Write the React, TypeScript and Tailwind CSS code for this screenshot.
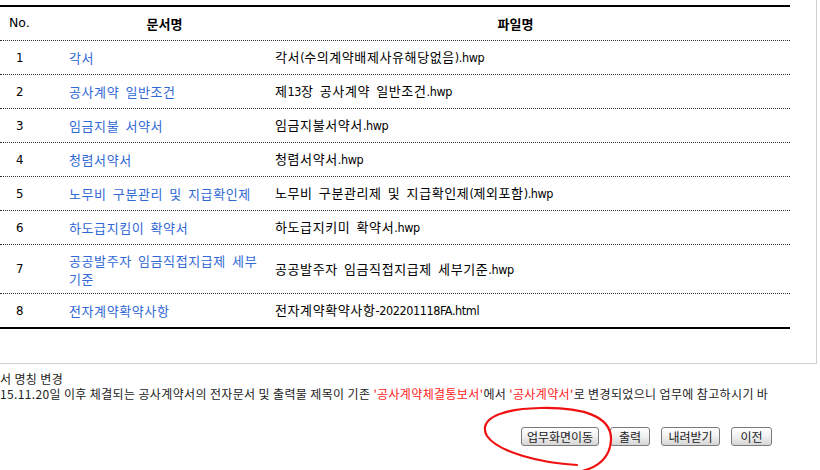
import React from 'react';

interface DocRow {
  no: number;
  title: string;
  file: string;
}

const rows: DocRow[] = [
  { no: 1, title: '각서', file: '각서(수의계약배제사유해당없음).hwp' },
  { no: 2, title: '공사계약 일반조건', file: '제13장 공사계약 일반조건.hwp' },
  { no: 3, title: '임금지불 서약서', file: '임금지불서약서.hwp' },
  { no: 4, title: '청렴서약서', file: '청렴서약서.hwp' },
  { no: 5, title: '노무비 구분관리 및 지급확인제', file: '노무비 구분관리제 및 지급확인제(제외포함).hwp' },
  { no: 6, title: '하도급지킴이 확약서', file: '하도급지키미 확약서.hwp' },
  { no: 7, title: '공공발주자 임금직접지급제 세부기준', file: '공공발주자 임금직접지급제 세부기준.hwp' },
  { no: 8, title: '전자계약확약사항', file: '전자계약확약사항-202201118FA.html' },
];

const font = { fontFamily: '"Noto Sans CJK KR", "Liberation Sans", sans-serif' };
const latin = { fontFamily: '"Liberation Sans Narrow", "DejaVu Sans Condensed", "Liberation Sans", sans-serif' };

// hangul runs get a bit of spacing, latin runs a narrower face (closer to the old gulim look)
const Mixed = ({ s }: { s: string }) => (
  <>
    {s.split(/([가-힣]+)/).map((p, i) =>
      p === '' ? null : /[가-힣]/.test(p) ? (
        <span key={i} className="tracking-[0.6px]">
          {p}
        </span>
      ) : (
        <span key={i} className="text-[12.5px] tracking-[-0.4px]" style={latin}>
          {p}
        </span>
      )
    )}
  </>
);

const btn =
  'h-[19px] rounded-[3px] border border-[#7a7a7a] bg-gradient-to-b from-white via-[#f0f0f0] to-[#d6d6d6] text-[12px] leading-none text-[#222] flex items-center justify-center';

export default function App() {
  return (
    <div className="relative w-[820px] h-[470px] overflow-hidden bg-white text-black" style={font}>
      <div className="w-[817px] border-r border-b border-[#cfcfcf] pt-[5px] pb-[34px]">
        <div className="w-[790px] border-t-2 border-b-2 border-black">
          <div className="flex h-[34px] items-center border-b border-dotted border-[#333] text-[13px]">
            <div className="w-[62px] pl-[9px]" style={{ fontFamily: '"DejaVu Sans", "Liberation Sans", sans-serif', fontSize: '12.5px' }}>
              No.
            </div>
            <div className="w-[205px] text-center font-bold">문서명</div>
            <div className="flex-1 pr-[26px] text-center font-bold">파일명</div>
          </div>
          {rows.map((r, i) => {
            const last = i === rows.length - 1;
            return (
              <div
                key={r.no}
                className={`flex items-center text-[13px] [word-spacing:3px] ${
                  r.no === 7 ? 'h-[49px]' : last ? 'h-[33px]' : 'h-[34px]'
                } ${last ? '' : 'border-b border-dotted border-[#333]'}`}
              >
                <div className="w-[62px] pl-[16px]" style={latin}>
                  {r.no}
                </div>
                <div className="w-[205px] pl-[7px] pr-[4px] leading-[17px] text-[#3068d6]">
                  <Mixed s={r.title} />
                </div>
                <div className="flex-1 pl-[8px]">
                  <Mixed s={r.file} />
                </div>
              </div>
            );
          })}
        </div>
      </div>

      <div className="mt-[7px] text-[12px] leading-[15px] tracking-[0.36px] text-[#222] whitespace-nowrap overflow-hidden w-[769px]">
        <div>서 명칭 변경</div>
        <div>
          15.11.20일 이후 체결되는 공사계약서의 전자문서 및 출력물 제목이 기존{' '}
          <span className="text-[#ff1a1a]">'공사계약체결통보서'</span>에서{' '}
          <span className="text-[#ff1a1a]">'공사계약서'</span>로 변경되었으니 업무에 참고하시기 바랍니다.
        </div>
      </div>

      <div className="mt-[26px] flex justify-end pr-[48px] gap-[11px]">
        <button className={`${btn} w-[78px]`}>업무화면이동</button>
        <button className={`${btn} w-[40px]`}>출력</button>
        <button className={`${btn} w-[59px]`}>내려받기</button>
        <button className={`${btn} w-[41px]`}>이전</button>
      </div>

      <svg className="absolute left-0 top-0 pointer-events-none" width="820" height="470">
        <path
          d="M 577 465 C 540 463, 498 452, 487 436 C 478 420, 498 409, 540 408 C 582 407, 612 416, 611 440 C 610 458, 598 468, 578 472"
          fill="none"
          stroke="#f01010"
          strokeWidth="2.2"
          strokeLinecap="round"
        />
      </svg>
    </div>
  );
}
